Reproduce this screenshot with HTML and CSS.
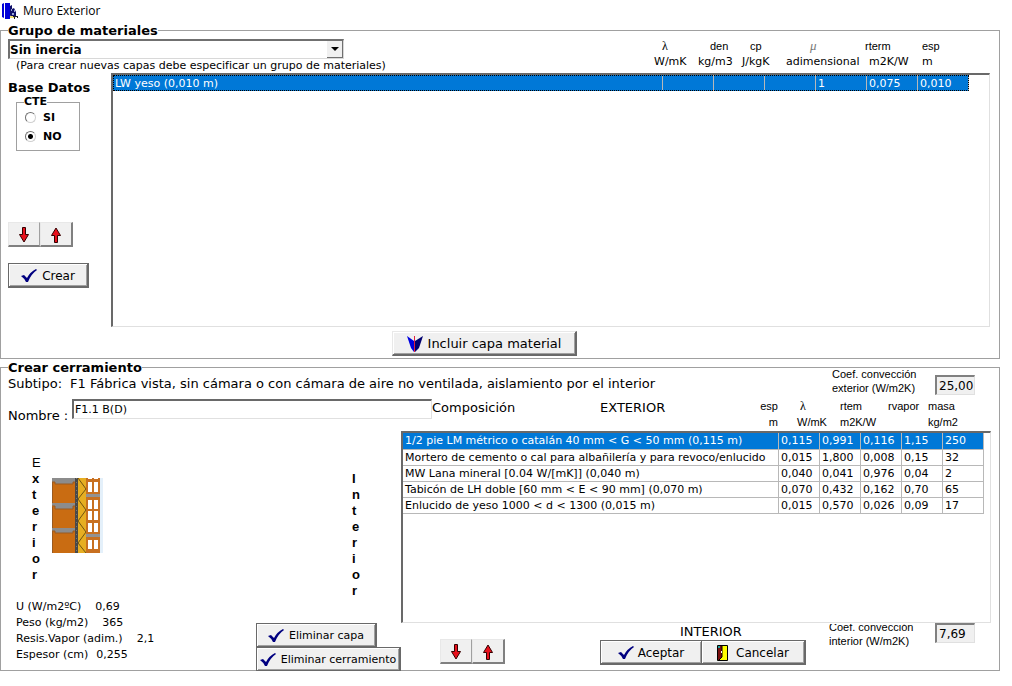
FILE: index.html
```html
<!DOCTYPE html>
<html lang="es">
<head>
<meta charset="utf-8">
<title>Muro Exterior</title>
<link rel="stylesheet" href="styles.css">
</head>
<body>
<svg class="defs" aria-hidden="true">
  <symbol id="check" viewBox="0 0 16 14"><path d="M0 7L3 6L6 9Q9 3 15 0L16 1Q10 5 7 13L5 13Q3 9 0 7Z" fill="#000080"/></symbol>
  <symbol id="down" viewBox="0 0 10 16"><path d="M3.500 .5H6.500V7.500H9.500L5 15L.5 7.500H3.500Z" fill="#e8101c" stroke="#300" stroke-width="1"/></symbol>
  <symbol id="up" viewBox="0 0 10 16"><path d="M3.500 15.500H6.500V8.500H9.500L5 1L.5 8.500H3.500Z" fill="#e8101c" stroke="#300" stroke-width="1"/></symbol>
</svg>

<header class="titlebar">
  <svg class="app-icon" viewBox="0 0 16 16" aria-hidden="true">
    <path d="M0 1L2 0V15L0 14ZM3 0H8V16H3Z" fill="#0000d8"/><path d="M8 3L10 2V6L12 5L14 9V14L9 15L8 12Z" fill="#10106a"/>
    <path d="M9 6H10V8H9ZM10 10H12V12H10ZM12 7H13V9H12Z" fill="#9aa8d8"/><path d="M8 13H12V15H8Z" fill="#f2e070"/><path d="M11 13H16V15H15V14H13V16H12V14H11Z" fill="#222"/>
  </svg>
  <h1 class="title">Muro Exterior</h1>
</header>

<main>
  <fieldset class="group">
    <legend class="group-title">Grupo de materiales</legend>
    <div class="materials-head">
      <div class="chooser">
        <div class="combo">
          <select class="combo-select" aria-label="Grupo de materiales"><option>Sin inercia</option></select>
          <span class="combo-arrow" aria-hidden="true"></span>
        </div>
        <p class="note">(Para crear nuevas capas debe especificar un grupo de materiales)</p>
      </div>
      <div class="units">
        <div class="unit unit-s"><span class="greek in-m">λ</span><span>W/mK</span></div>
        <div class="unit unit-s"><span class="sym in-l">den</span><span>kg/m3</span></div>
        <div class="unit unit-s"><span class="sym in-m">cp</span><span>J/kgK</span></div>
        <div class="unit unit-l"><span class="greek mu">μ</span><span>adimensional</span></div>
        <div class="unit unit-m"><span class="sym">rterm</span><span class="in-s">m2K/W</span></div>
        <div class="unit unit-e"><span class="sym">esp</span><span>m</span></div>
      </div>
    </div>
    <div class="materials-body">
      <div class="sidebar">
        <h2 class="side-title">Base Datos</h2>
        <fieldset class="cte">
          <legend class="cte-title">CTE</legend>
          <label class="option"><input class="radio" type="radio" name="cte">SI</label>
          <label class="option"><input class="radio" type="radio" name="cte" checked>NO</label>
        </fieldset>
        <div class="arrows side-arrows">
          <button class="arrow" aria-label="Bajar"><svg class="arrow-icon"><use href="#down"/></svg></button>
          <button class="arrow last" aria-label="Subir"><svg class="arrow-icon"><use href="#up"/></svg></button>
        </div>
        <button class="btn create"><svg class="check"><use href="#check"/></svg>Crear</button>
      </div>
      <div class="list material-list">
        <table class="rows material-rows">
          <colgroup><col><col class="c51"><col class="c51"><col class="c51"><col class="c51"><col class="c51"><col class="c51"></colgroup>
          <tr class="selected"><td>LW yeso (0,010 m)</td><td></td><td></td><td></td><td>1</td><td>0,075</td><td>0,010</td></tr>
        </table>
      </div>
    </div>
    <div class="include-bar">
      <button class="btn thin include"><svg class="include-icon" viewBox="0 0 16 16" aria-hidden="true"><path d="M0 0L7 5V16L4 12Z" fill="#0000e0"/><path d="M16 0L8 5V16L12 12Z" fill="#000070"/><path d="M7 0H8V16H7Z" fill="#e02040"/></svg>Incluir capa material</button>
    </div>
  </fieldset>

  <fieldset class="group">
    <legend class="group-title">Crear cerramiento</legend>
    <div class="subtype-row">
      <p class="subtype"><span>Subtipo:</span><span>F1 Fábrica vista, sin cámara o con cámara de aire no ventilada, aislamiento por el interior</span></p>
      <div class="coef">
        <label class="coef-label" for="ext">Coef. convección<br>exterior (W/m2K)</label>
        <input class="coef-input low" id="ext" value="25,00">
      </div>
    </div>
    <div class="name-row">
      <label class="name-label" for="name">Nombre :</label>
      <input class="name-input" id="name" value="F1.1 B(D)">
      <span class="comp">Composición</span>
      <span class="ext">EXTERIOR</span>
      <div class="units layer-units">
        <div class="unit u-esp sym"><span>esp</span><span>m</span></div>
        <div class="unit u-lam sym"><span class="greek">λ</span><span>W/mK</span></div>
        <div class="unit u-rt sym"><span>rtem</span><span>m2K/W</span></div>
        <div class="unit u-rv sym"><span>rvapor</span></div>
        <div class="unit u-mass sym"><span>masa</span><span>kg/m2</span></div>
      </div>
    </div>
    <div class="enclosure">
      <div class="left">
        <div class="diagram">
          <div class="vertical">E<b>x</b><b>t</b><b>e</b><b>r</b><b>i</b><b>o</b><b>r</b></div>
          <svg class="wall" viewBox="0 0 51 75" role="img" aria-label="Sección del muro">
            <path d="M0 0H23V75H0Z" fill="#c96c12"/>
            <path d="M0 0H23V4H21V6H3V4H0ZM0 25H23V28H21V31H3V28H0ZM0 50H23V53H21V55H3V53H0Z" fill="#8c8c8c"/>
            <path d="M0 4H3V6H21V4H23M0 28H3V31H21V28H23M0 53H3V55H21V53H23M.5 4V25M.5 29V50M.5 53V75" fill="none" stroke="#9a5a20"/>
            <path d="M23 0H26V75H23Z" fill="#494949"/><path d="M24.500 0V75" stroke="#777" stroke-dasharray="1 3"/>
            <path d="M26 0H34V75H26Z" fill="#e6ae22"/>
            <path d="M26 0L34 11L26 21L34 32L26 43L34 54L26 65L34 75" fill="none" stroke="#6f5310"/>
            <path d="M34 0H48V75H34Z" fill="#c87020"/><path d="M48 0H51V75H48Z" fill="#e4f0fa"/>
            <path d="M36 4H40V14H36ZM42 4H46V14H42ZM36 22H40V31H36ZM42 22H46V31H42ZM36 33H40V42H36ZM42 33H46V42H42ZM36 45H40V54H36ZM42 45H46V54H42ZM36 62H40V71H36ZM42 62H46V71H42Z" fill="#fff"/>
            <path d="M34 16H48V19H34ZM34 56H48V59H34Z" fill="#929292"/><path d="M36 0H40V1H36ZM42 0H46V1H42Z" fill="#fff"/>
          </svg>
          <div class="vertical interior"><b>I</b><b>n</b><b>t</b><b>e</b><b>r</b><b>i</b><b>o</b><b>r</b></div>
        </div>
        <div class="summary">
          <dl class="stats">
            <div class="stat"><dt>U (W/m2ºC)</dt><dd class="wide">0,69</dd></div>
            <div class="stat"><dt>Peso (kg/m2)</dt><dd class="wide">365</dd></div>
            <div class="stat"><dt>Resis.Vapor (adim.)</dt><dd class="wide">2,1</dd></div>
            <div class="stat"><dt>Espesor (cm)</dt><dd>0,255</dd></div>
          </dl>
          <div class="delete">
            <button class="btn small del-layer"><svg class="check"><use href="#check"/></svg>Eliminar capa</button>
            <button class="btn small del-all"><svg class="check"><use href="#check"/></svg>Eliminar cerramiento</button>
          </div>
        </div>
      </div>
      <div class="right">
        <div class="list layer-list">
          <table class="rows layer-rows">
            <colgroup><col><col class="c41"><col class="c41"><col class="c41"><col class="c41"><col class="c41"></colgroup>
            <tr class="selected"><td>1/2 pie LM métrico o catalán 40 mm &lt; G &lt; 50 mm (0,115 m)</td><td>0,115</td><td>0,991</td><td>0,116</td><td>1,15</td><td>250</td></tr>
            <tr><td>Mortero de cemento o cal para albañilería y para revoco/enlucido</td><td>0,015</td><td>1,800</td><td>0,008</td><td>0,15</td><td>32</td></tr>
            <tr><td>MW Lana mineral [0.04 W/[mK]] (0,040 m)</td><td>0,040</td><td>0,041</td><td>0,976</td><td>0,04</td><td>2</td></tr>
            <tr><td>Tabicón de LH doble [60 mm &lt; E &lt; 90 mm] (0,070 m)</td><td>0,070</td><td>0,432</td><td>0,162</td><td>0,70</td><td>65</td></tr>
            <tr><td>Enlucido de yeso 1000 &lt; d &lt; 1300 (0,015 m)</td><td>0,015</td><td>0,570</td><td>0,026</td><td>0,09</td><td>17</td></tr>
          </table>
        </div>
        <div class="footer">
          <div class="arrows foot-arrows">
            <button class="arrow" aria-label="Bajar capa"><svg class="arrow-icon"><use href="#down"/></svg></button>
            <button class="arrow last" aria-label="Subir capa"><svg class="arrow-icon"><use href="#up"/></svg></button>
          </div>
          <div class="confirm">
            <span class="int">INTERIOR</span>
            <div class="confirm-buttons">
              <button class="btn accept"><svg class="check"><use href="#check"/></svg>Aceptar</button>
              <button class="btn cancel"><svg class="door" viewBox="0 0 11 16" aria-hidden="true"><path d="M.5 .5H10.500V15.500H.5Z" fill="#ff0" stroke="#000"/><path d="M1 1H5V12L2 15H1Z" fill="#7a1010"/><path d="M1 1H3V3H1Z" fill="#20a0a0"/><path d="M5 1V12L2 15" fill="none" stroke="#000"/><path d="M4 6H5V8H4Z" fill="#fff"/></svg>Cancelar</button>
            </div>
          </div>
          <div class="coef coef-int">
            <label class="coef-label cut" for="int">Coef. convección<br>interior (W/m2K)</label>
            <input class="coef-input" id="int" value="7,69">
          </div>
        </div>
      </div>
    </div>
  </fieldset>
</main>
</body>
</html>
```
FILE: styles.css
```css
* { box-sizing: border-box; }
body { margin: 0; padding-right: 12px; background: #fff; color: #000; font: 11px/16px "DejaVu Sans", Verdana, sans-serif; }
h1, h2, p, dl, dd { margin: 0; }
button, input, select { font: inherit; color: inherit; margin: 0; }
.defs { display: none; }

.titlebar { display: flex; align-items: center; gap: 5px; height: 22px; padding-left: 2px; }
.app-icon { width: 16px; height: 16px; }
.title { font: 12px/16px "Open Sans", "Noto Sans", sans-serif; }

.group { margin: 0; padding: 0; min-width: 0; border: 1px solid #a0a0a0; }
.group-title { margin-left: 7px; padding: 1px 0 0; font-size: 13px; font-weight: bold; line-height: 16px; }

.materials-head { display: flex; justify-content: space-between; height: 34px; padding-left: 7px; }
.combo { position: relative; width: 336px; height: 20px; border: 1px solid #d8d8d8; border-top: 2px solid #707070; border-left: 2px solid #707070; }
.combo-select { display: block; width: 100%; height: 17px; padding: 0; border: 0; background: #fff; appearance: none; font-size: 12px; font-weight: bold; line-height: 16px; }
.combo-arrow { position: absolute; top: 0; right: 0; width: 16px; height: 17px; background: #f0f0f0; border-right: 1px solid #707070; border-bottom: 1px solid #707070; pointer-events: none; }
.combo-arrow::after { content: ""; position: absolute; top: 6px; left: 4px; border: 4px solid transparent; border-top-color: #000; border-bottom: 0; }
.note { padding-left: 8px; line-height: 14px; white-space: nowrap; }
.units { display: flex; }
.unit { display: flex; flex-direction: column; white-space: nowrap; }
.materials-head .units { margin-top: -1px; }
.sym { font-family: "Liberation Sans", Arial, sans-serif; }
.greek { font-family: "Liberation Serif", "Times New Roman", serif; font-size: 12px; }
.mu { padding-left: 24px; font-style: italic; font-size: 13px; line-height: 15px; padding-bottom: 1px; color: #777; }
.in-s { padding-left: 4px; }
.in-m { padding-left: 8px; }
.in-l { padding-left: 12px; }
.unit-s { width: 44px; }
.unit-l { width: 79px; }
.unit-m { width: 57px; }
.unit-e { width: 77px; }

.materials-body { display: grid; grid-template-columns: 110px 1fr; padding-right: 9px; }
.sidebar { padding: 7px 0 0 7px; }
.side-title { font-size: 13px; line-height: 16px; }
.cte { width: 64px; margin: 0 0 0 8px; padding: 0 0 4px 8px; border: 1px solid #a0a0a0; }
.cte-title { margin-left: -1px; padding: 0; font-weight: bold; line-height: 12px; }
.option { display: flex; align-items: center; gap: 7px; height: 19px; font-weight: bold; }
.radio { appearance: none; width: 11px; height: 11px; border: 1px solid #d0d0d0; border-top-color: #707070; border-left-color: #707070; border-radius: 50%; background: #fff; }
.radio:checked { background: radial-gradient(#000 0 2px, #fff 3px); }

.list { border: 1px solid #e0e0e0; border-top: 2px solid #696969; border-left: 2px solid #696969; }
.material-list { height: 254px; padding-right: 20px; }
.layer-list { height: 192px; padding-right: 6px; }
.rows { width: 100%; table-layout: fixed; border-collapse: collapse; }
.rows td { height: 16px; padding: 0 0 0 2px; line-height: 15px; overflow: hidden; white-space: nowrap; border-right: 1px solid #b8b8b8; border-bottom: 1px solid #b8b8b8; }
.material-rows { outline: 1px dotted #000; outline-offset: -1px; }
.material-rows td { padding: 1px 0 0 2px; border-bottom: 0; line-height: 15px; }
.selected { background: #0078d7; color: #fff; }
.c51 { width: 51px; }
.c41 { width: 41px; }

.btn { display: flex; align-items: center; justify-content: center; gap: 5px; height: 25px; padding: 1px 0 0; background: #f0f0f0; border: 1px solid #696969; border-right-width: 2px; border-bottom-width: 2px; box-shadow: inset 1px 1px #fff, inset -1px -1px #a0a0a0; font-size: 12px; white-space: nowrap; }
.small { font-size: 11px; }
.check { width: 16px; height: 14px; flex: none; }
.thin { border-top-color: #e8e8e8; border-left-color: #e8e8e8; }
.include-bar { display: flex; padding: 4px 0 2px 391px; }
.include { width: 185px; padding-top: 2px; font-size: 13px; }
.include-icon { width: 16px; height: 16px; }
.create { width: 81px; margin-top: 16px; }
.arrows { display: flex; }
.side-arrows { margin-top: 71px; }
.arrow { display: flex; align-items: center; justify-content: center; width: 32px; height: 25px; padding: 1px 0 0; background: #f0f0f0; border: 1px solid #e8e8e8; border-right-color: #a0a0a0; border-bottom: 2px solid #808080; }
.arrow.last { width: 33px; border-right: 2px solid #808080; }
.arrow-icon { width: 10px; height: 16px; }

.subtype-row { display: flex; justify-content: space-between; margin-top: -9px; height: 32px; padding: 0 24px 0 7px; }
.subtype { display: flex; gap: 8px; padding-top: 9px; font-size: 13px; white-space: nowrap; }
.coef { display: flex; }
.coef-label { width: 103px; font: 11px/14px "Liberation Sans", Arial, sans-serif; white-space: nowrap; }
.coef-input { width: 40px; height: 20px; padding: 0 0 0 2px; background: #f0f0f0; border: 1px solid #e0e0e0; border-top: 2px solid #808080; border-left: 2px solid #808080; font-size: 12px; }
.low { margin-top: 8px; }
.name-row { display: flex; height: 32px; padding-left: 7px; font-size: 13px; white-space: nowrap; }
.name-label { width: 64px; padding-top: 9px; }
.name-input { width: 360px; height: 20px; padding: 0 0 0 1px; background: #fff; border: 1px solid #e0e0e0; border-top: 2px solid #696969; border-left: 2px solid #696969; font-size: 11px; }
.comp { width: 168px; padding-top: 1px; }
.ext { padding-top: 1px; }
.layer-units { margin: -1px 0 0 auto; font-size: 11px; }
.u-esp { width: 18px; margin-right: 19px; align-items: flex-end; }
.u-lam { width: 43px; }
.u-lam .greek { padding-left: 3px; }
.u-rt { width: 48px; }
.u-rv { width: 40px; }
.u-mass { width: 71px; }

.enclosure { display: grid; grid-template-columns: 400px 1fr; padding-right: 8px; height: 239px; }
.diagram { display: flex; padding: 24px 0 0 31px; }
.vertical { display: flex; flex-direction: column; width: 20px; font: 13px/16px "Liberation Sans", Arial, sans-serif; }
.interior { margin: 16px 0 0 auto; width: 49px; }
.wall { width: 51px; height: 75px; margin-top: 23px; }
.summary { display: flex; padding-left: 15px; }
.stats { width: 240px; }
.stat { display: flex; gap: 8px; }
.wide { padding-left: 6px; }
.delete { padding-top: 24px; }
.del-layer { width: 121px; }
.del-all { width: 145px; margin-top: -1px; }
.footer { display: flex; }
.foot-arrows { width: 160px; padding: 16px 0 0 39px; }
.confirm { width: 267px; padding-left: 39px; }
.int { display: block; padding-left: 80px; font-size: 13px; line-height: 17px; }
.confirm-buttons { display: flex; }
.accept { width: 102px; gap: 4px; border-right-width: 1px; }
.cancel { width: 104px; gap: 8px; border-left: 0; }
.door { width: 11px; height: 16px; }
.coef-int { margin-left: auto; padding-right: 16px; height: 26px; }
.coef-int .coef-label { width: 106px; }
.cut { height: 24px; margin-top: 1px; display: flex; flex-direction: column; justify-content: flex-end; overflow: hidden; }
```
